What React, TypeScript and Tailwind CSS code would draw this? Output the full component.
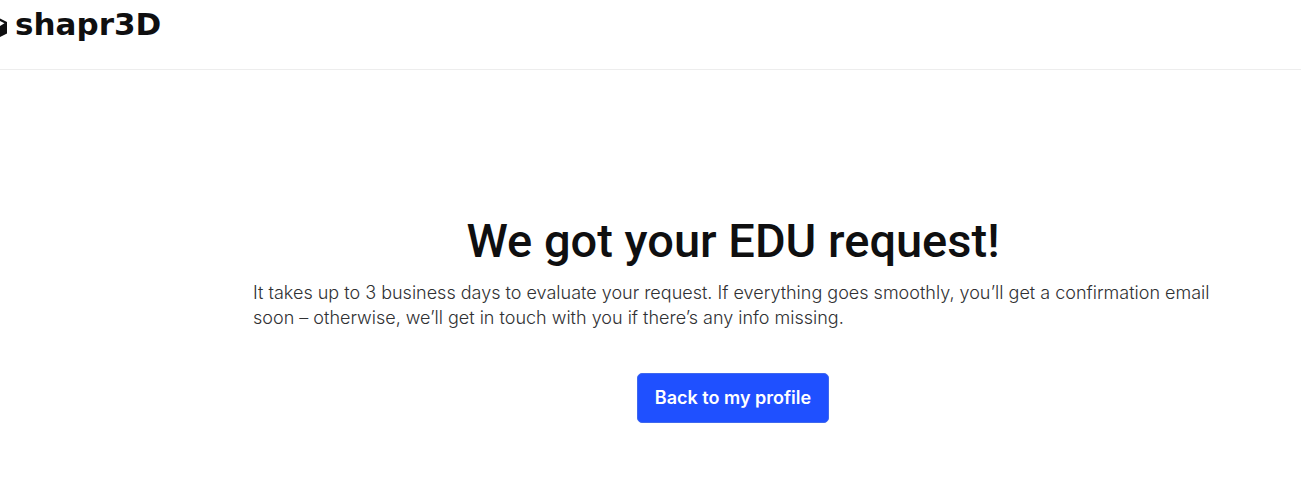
import React from 'react';

const Logo = () => (
  <a href="#" aria-label="shapr3D" className="flex items-center gap-2 text-[#0f0f10]">
    <svg viewBox="0 0 24 24" className="-ml-[17px] mt-2 h-6 w-6" aria-hidden="true">
      <path d="M12 0 L24 6 V17.5 L12 23.5 L0 17.5 V6 Z" fill="currentColor" />
      <path d="M12 7 L17 5 L21.5 7.2 L16.5 10.2 L12 8.5 Z" fill="#fff" />
    </svg>
    <span className="font-['DejaVu_Sans'] text-[31px] leading-8 font-bold">shapr3D</span>
  </a>
);

const Header = () => (
  <header className="flex h-[70px] items-start overflow-hidden border-b border-[#ededed] pt-2">
    <Logo />
  </header>
);

const RequestReceived = () => (
  <main className="pt-[140px] pr-4 pb-14 pl-[181px]">
    <section className="mx-auto flex max-w-[960px] flex-col items-center">
      <h1 className="font-[Roboto] text-[47px] leading-[62px] font-medium text-[#0f0f10]">
        We got your EDU request!
      </h1>
      <p className="mt-2 w-full text-lg leading-[25px] font-light text-[#303133]">
        It takes up to 3 business days to evaluate your request. If everything goes smoothly, you’ll get a
        confirmation email soon – otherwise, we’ll get in touch with you if there’s any info missing.
      </p>
      <button
        type="button"
        className="mt-[43px] h-[50px] w-48 rounded-[5px] border border-[#3f68ee] bg-[#1f50ff] text-lg font-semibold text-white"
      >
        Back to my profile
      </button>
    </section>
  </main>
);

const App = () => (
  <div className="bg-white font-[Inter,sans-serif]">
    <Header />
    <RequestReceived />
  </div>
);

export default App;
